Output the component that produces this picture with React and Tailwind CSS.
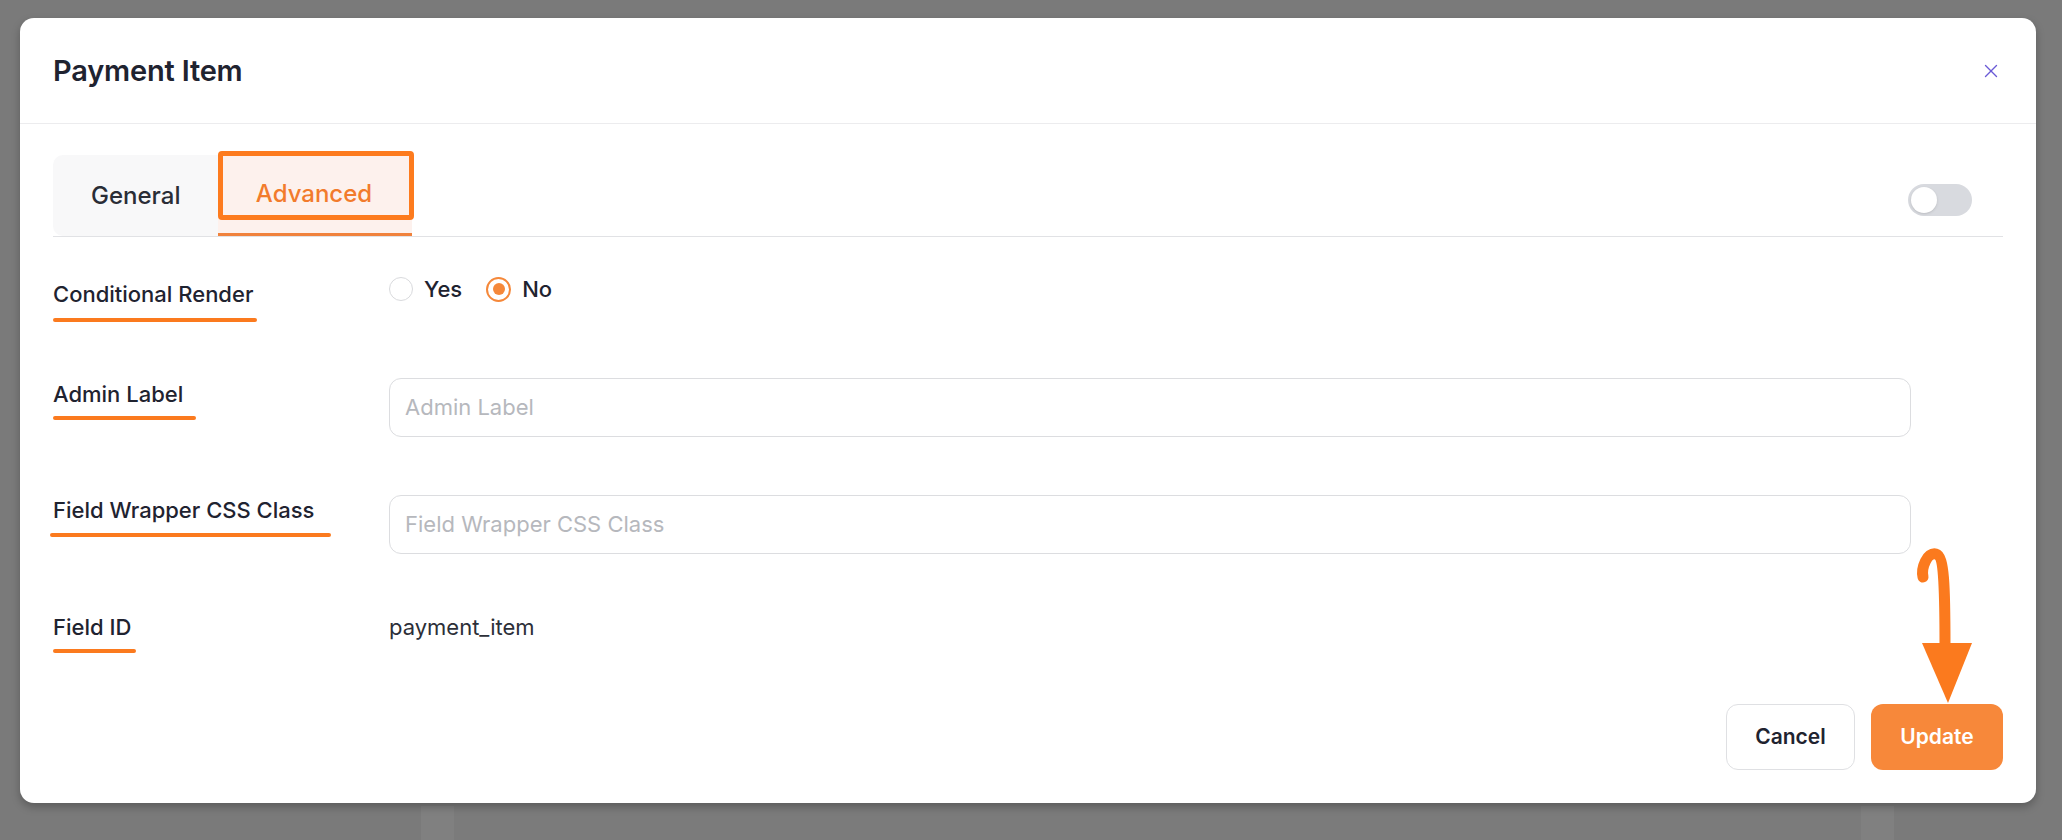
import { X } from 'lucide-react'

const ink = 'text-[#1f2330]'

// orange marker line drawn under a label
function Marker({ w, shift = 0 }) {
  return (
    <div
      className="h-[4px] rounded-full bg-[#fb7a1e]"
      style={{ width: w, marginLeft: shift }}
    />
  )
}

function Radio({ checked, label }) {
  return (
    <label className="flex items-center gap-[11px]">
      {checked ? (
        <span className="flex h-[25px] w-[25px] items-center justify-center rounded-full border-2 border-[#f5883a] bg-white">
          <span className="h-[12px] w-[12px] rounded-full bg-[#f5883a]" />
        </span>
      ) : (
        <span className="h-[24px] w-[24px] rounded-full border border-[#d9dadd] bg-white" />
      )}
      <span className={`text-[22px] font-medium leading-[30px] ${ink}`}>{label}</span>
    </label>
  )
}

function Toggle() {
  return (
    <div className="mt-[8px] flex h-[32px] w-[64px] items-center rounded-full bg-[#d8dadf] px-[3px]">
      <div className="h-[26px] w-[26px] rounded-full bg-white shadow-sm" />
    </div>
  )
}

function Arrow() {
  return (
    <svg
      className="absolute left-[1890px] top-[528px]"
      width="70"
      height="162"
      viewBox="0 0 70 162"
    >
      <path
        d="M13 31 C 11 22, 17 6, 26 8 C 34 10, 35 40, 35 100"
        fill="none"
        stroke="#fb7a1e"
        strokeWidth="11"
        strokeLinecap="round"
      />
      <polygon points="12,97 62,97 38,157" fill="#fb7a1e" />
    </svg>
  )
}

function Input({ placeholder }) {
  return (
    <div className="flex h-[59px] w-[1522px] items-center rounded-[12px] border border-[#dcdde0] bg-white px-[15px]">
      <span className="text-[22px] text-[#b6b8bd]">{placeholder}</span>
    </div>
  )
}

export default function App() {
  return (
    <div
      className="relative h-[840px] w-full overflow-hidden bg-[#7a7a7a]"
      style={{ fontFamily: 'Inter, "Noto Sans", sans-serif' }}
    >
      {/* page behind the overlay */}
      <div className="ml-[421px] mt-[806px] h-[34px] w-[1473px] border-x-[33px] border-[#808080] bg-[#7b7b7b]" />

      <div className="absolute inset-0 pl-[20px] pr-[26px] pt-[18px]">
        <div className="relative h-[785px] rounded-[14px] bg-white shadow-[0_4px_8px_rgba(0,0,0,0.25)]">
          {/* header */}
          <div className="flex h-[106px] items-center justify-between border-b border-[#ececee] pl-[33px] pr-[34px]">
            <h2 className={`text-[29px] font-semibold tracking-[-0.2px] ${ink}`}>Payment Item</h2>
            <X className="h-[22px] w-[22px] text-[#6a5ad6]" strokeWidth={1.5} />
          </div>

          <div className="px-[33px] pt-[31px]">
            {/* tabs */}
            <div className="flex h-[82px] items-stretch justify-between border-b border-[#e1e2e5]">
              <div className="flex">
                <div className="flex w-[165px] items-center rounded-l-[10px] bg-[#f8f8f9] pl-[38px]">
                  <span className="text-[24px] font-medium text-[#2a2d36]">General</span>
                </div>
                <div className="relative flex w-[194px] items-center justify-center border-b-[3px] border-[#f0823c] bg-[#fdf1ed] pr-[2px]">
                  <span className="text-[24px] font-medium text-[#f27b2c]">Advanced</span>
                  <div className="absolute left-0 right-[-2px] top-[-4px] h-[69px] rounded-[4px] border-[5px] border-[#fd7b1e]" />
                </div>
              </div>
              <div className="flex items-center pr-[31px]">
                <Toggle />
              </div>
            </div>

            {/* form rows */}
            <div className="mt-[37px] flex h-[104px] items-start">
              <div className="w-[336px] pt-[5px]">
                <div className={`text-[22px] font-medium leading-[30px] ${ink}`}>Conditional Render</div>
                <div className="mt-[9px]"><Marker w={204} /></div>
              </div>
              <div className="flex items-center gap-[24px]">
                <Radio label="Yes" />
                <Radio checked label="No" />
              </div>
            </div>

            <div className="flex h-[117px] items-start">
              <div className="w-[336px] pt-[1px]">
                <div className={`text-[22px] font-medium leading-[30px] ${ink}`}>Admin Label</div>
                <div className="mt-[7px]"><Marker w={143} /></div>
              </div>
              <Input placeholder="Admin Label" />
            </div>

            <div className="flex h-[117px] items-start">
              <div className="w-[336px]">
                <div className={`text-[22px] font-medium leading-[30px] ${ink}`}>Field Wrapper CSS Class</div>
                <div className="mt-[8px]"><Marker w={281} shift={-3} /></div>
              </div>
              <Input placeholder="Field Wrapper CSS Class" />
            </div>

            <div className="flex h-[92px] items-start">
              <div className="w-[336px]">
                <div className={`text-[22px] font-medium leading-[30px] ${ink}`}>Field ID</div>
                <div className="mt-[7px]"><Marker w={83} /></div>
              </div>
              <div className="text-[22px] leading-[30px] text-[#2c2f38]">payment_item</div>
            </div>

            {/* footer */}
            <div className="flex justify-end gap-[16px]">
              <button className={`h-[66px] w-[129px] rounded-[12px] border border-[#dfe0e3] bg-white text-[21px] font-semibold ${ink}`}>
                Cancel
              </button>
              <button className="h-[66px] w-[132px] rounded-[12px] bg-[#f7883a] text-[21px] font-semibold text-white">
                Update
              </button>
            </div>
          </div>

          <Arrow />
        </div>
      </div>
    </div>
  )
}
